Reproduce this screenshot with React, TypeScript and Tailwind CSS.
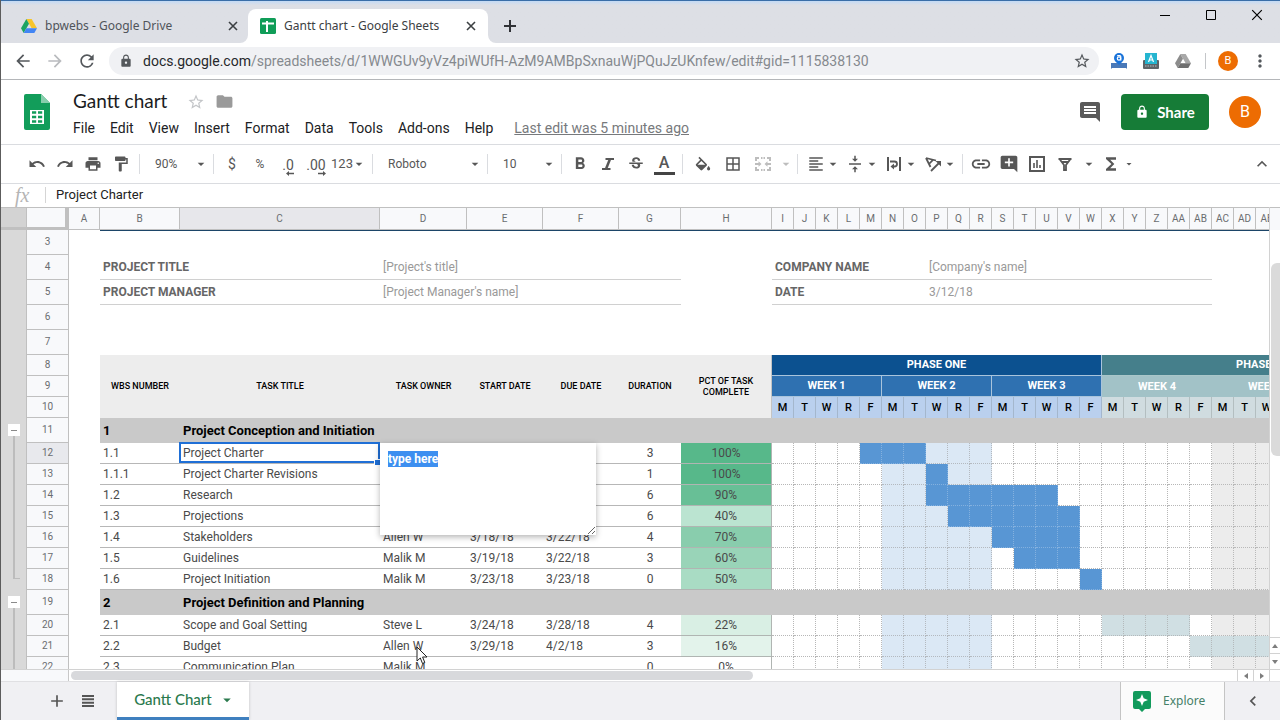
import { useEffect, useRef } from "react";
import type { ReactNode } from "react";
import {
  MdAdd,
  MdAddComment,
  MdArrowBack,
  MdArrowDropDown,
  MdArrowForward,
  MdBorderAll,
  MdComment,
  MdFolder,
  MdFormatAlignLeft,
  MdFormatBold,
  MdFormatPaint,
  MdFunctions,
  MdKeyboardArrowLeft,
  MdKeyboardArrowUp,
  MdLink,
  MdLock,
  MdMoreVert,
  MdPrint,
  MdRedo,
  MdRefresh,
  MdStarBorder,
  MdStrikethroughS,
  MdUndo,
  MdVerticalAlignCenter,
} from "react-icons/md";

type Task = {
  row: number;
  wbs: string;
  title: string;
  owner?: string;
  start?: string;
  due?: string;
  days?: string;
  pct?: string;
  pctBg?: string;
  bar?: [number, number];
  section?: boolean;
  last?: boolean;
};

const DAYS = Array.from({ length: 30 }, (_, i) => i);

const LOADED_DAYS = DAYS.slice(0, 23);

const DAY_COLUMNS = [
  ..."IJKLMNOPQRSTUVWXYZ".split(""),
  ..."ABCDE".split("").map((c) => "A" + c),
];

const TASKS: Task[] = [
  { row: 11, wbs: "1", title: "Project Conception and Initiation", section: true },
  { row: 12, wbs: "1.1", title: "Project Charter", days: "3", pct: "100%", pctBg: "bg-[#57b88a]", bar: [4, 6] },
  { row: 13, wbs: "1.1.1", title: "Project Charter Revisions", days: "1", pct: "100%", pctBg: "bg-[#57b88a]", bar: [7, 7] },
  { row: 14, wbs: "1.2", title: "Research", days: "6", pct: "90%", pctBg: "bg-[#68bf96]", bar: [7, 12] },
  { row: 15, wbs: "1.3", title: "Projections", days: "6", pct: "40%", pctBg: "bg-[#bbe4d1]", bar: [8, 13] },
  { row: 16, wbs: "1.4", title: "Stakeholders", owner: "Allen W", start: "3/18/18", due: "3/22/18", days: "4", pct: "70%", pctBg: "bg-[#89cdad]", bar: [10, 13] },
  { row: 17, wbs: "1.5", title: "Guidelines", owner: "Malik M", start: "3/19/18", due: "3/22/18", days: "3", pct: "60%", pctBg: "bg-[#99d4b8]", bar: [11, 13] },
  { row: 18, wbs: "1.6", title: "Project Initiation", owner: "Malik M", start: "3/23/18", due: "3/23/18", days: "0", pct: "50%", pctBg: "bg-[#a9dcc4]", bar: [14, 14], last: true },
  { row: 19, wbs: "2", title: "Project Definition and Planning", section: true },
  { row: 20, wbs: "2.1", title: "Scope and Goal Setting", owner: "Steve L", start: "3/24/18", due: "3/28/18", days: "4", pct: "22%", pctBg: "bg-[#d9efe4]", bar: [15, 18] },
  { row: 21, wbs: "2.2", title: "Budget", owner: "Allen W", start: "3/29/18", due: "4/2/18", days: "3", pct: "16%", pctBg: "bg-[#e3f3eb]", bar: [19, 22] },
  { row: 22, wbs: "2.3", title: "Communication Plan", owner: "Malik M", days: "0", pct: "0%", pctBg: "bg-white" },
];

const MENUS = ["File", "Edit", "View", "Insert", "Format", "Data", "Tools", "Add-ons", "Help"];

/* ---------- browser window ---------- */

function DriveLogo({ gray = false }: { gray?: boolean }) {
  return (
    <svg viewBox="0 0 24 21" className="w-4 h-3.5">
      <path d="M8 0h8l8 14h-8z" fill={gray ? "#a8a8a8" : "#f7c52b"} />
      <path d="M8 0l4 7-8 14-4-7z" fill={gray ? "#8c8c8c" : "#1da462"} />
      <path d="M8 14h16l-4 7H4z" fill={gray ? "#6f6f6f" : "#4285f4"} />
    </svg>
  );
}

function SheetsFavicon() {
  return (
    <svg viewBox="0 0 16 16" className="w-4 h-4">
      <rect width="16" height="16" rx="1.5" fill="#109d58" />
      <path d="M2 5.5h12M7 3v11" stroke="#fff" strokeWidth="2" />
    </svg>
  );
}

function Cross({ className = "" }: { className?: string }) {
  return (
    <svg viewBox="0 0 10 10" className={className} stroke="currentColor" fill="none">
      <path d="M1 1l8 8M9 1l-8 8" />
    </svg>
  );
}

function TabStrip() {
  return (
    <div className="flex h-[43px] border-t border-[#3a6ea8] bg-linear-to-b from-[#c3daf5] from-0% to-[#dddfe5] to-10% text-xs text-[#50545a] font-['Noto_Sans','Open_Sans',sans-serif]">
      <div className="flex w-[247px] items-center pl-5 pt-2">
        <DriveLogo />
        <span className="ml-2">bpwebs - Google Drive</span>
        <button aria-label="Close bpwebs tab" className="ml-auto mr-2.5 text-[#3c4043]">
          <Cross className="w-2.5 h-2.5 stroke-[1.6]" />
        </button>
      </div>
      <div className="relative mt-2 flex w-[240px] items-center rounded-t-lg bg-white pl-3 text-[#3c4043]">
        <svg viewBox="0 0 8 8" className="absolute -left-2 bottom-0 w-2 h-2">
          <path d="M8 0v8H0a8 8 0 0 0 8-8z" fill="#fff" />
        </svg>
        <svg viewBox="0 0 8 8" className="absolute -right-2 bottom-0 w-2 h-2">
          <path d="M0 0v8h8a8 8 0 0 1-8-8z" fill="#fff" />
        </svg>
        <SheetsFavicon />
        <span className="ml-2">Gantt chart - Google Sheets</span>
        <button aria-label="Close Gantt chart tab" className="ml-auto mr-3">
          <Cross className="w-2.5 h-2.5 stroke-[1.6]" />
        </button>
      </div>
      <button aria-label="New tab" className="ml-3 mt-2 flex w-5 items-center justify-center text-[#303236]">
        <svg viewBox="0 0 12 12" className="w-3 h-3" stroke="currentColor" strokeWidth="2">
          <path d="M6 0v12M0 6h12" />
        </svg>
      </button>
      <div className="ml-auto flex h-7 text-black">
        <button aria-label="Minimize" className="flex w-[46px] items-center justify-center">
          <svg viewBox="0 0 10 10" className="w-2.5 h-2.5" stroke="currentColor">
            <path d="M0 5.5h10" />
          </svg>
        </button>
        <button aria-label="Maximize" className="flex w-[46px] items-center justify-center">
          <svg viewBox="0 0 10 10" className="w-2.5 h-2.5" stroke="currentColor" fill="none">
            <path d="M.5.5h9v9h-9z" />
          </svg>
        </button>
        <button aria-label="Close window" className="flex w-[46px] items-center justify-center">
          <Cross className="w-3 h-3" />
        </button>
      </div>
    </div>
  );
}

function AddressBar() {
  return (
    <div className="flex h-[37px] items-center border-b border-[#b4b6b9] bg-white text-xl text-[#54585c]">
      <button aria-label="Back" className="ml-3 flex w-5 justify-center">
        <MdArrowBack />
      </button>
      <button aria-label="Forward" className="ml-3 flex w-5 justify-center text-[#b9bbbe]">
        <MdArrowForward />
      </button>
      <button aria-label="Reload" className="ml-3 flex w-5 justify-center">
        <MdRefresh />
      </button>
      <div className="ml-3 flex h-7 flex-1 items-center rounded-full bg-[#f0f1f4] pl-2.5 pr-2">
        <MdLock className="w-3.5 h-3.5" />
        <p className="ml-2.5 flex-1 truncate text-sm text-[#85898e] font-['Roboto',sans-serif]">
          <span className="text-[#26282b]">docs.google.com</span>
          /spreadsheets/d/1WWGUv9yVz4piWUfH-AzM9AMBpSxnauWjPQuJzUKnfew/edit#gid=1115838130
        </p>
        <button aria-label="Bookmark this page">
          <MdStarBorder className="w-[18px] h-[18px]" />
        </button>
      </div>
      <button aria-label="Bpwebs extension" className="ml-3 flex w-4 justify-center">
        <svg viewBox="0 0 16 16" className="w-4 h-4">
          <path d="M0 10h16v6l-1-1H1l-1 1z" fill="#4a79b8" />
          <circle cx="8" cy="5" r="5" fill="#1a73d9" />
          <path d="M8 12l-3-3h6z" fill="#1a73d9" />
          <circle cx="8" cy="5.5" r="1.7" fill="none" stroke="#fff" strokeWidth="1.2" />
          <path d="M6.2 2.6h2.6q1 0 1 1.2v3.8" fill="none" stroke="#fff" strokeWidth="1.2" />
        </svg>
      </button>
      <button aria-label="Keyboard extension" className="ml-4 flex w-4 justify-center">
        <svg viewBox="0 0 16 16" className="w-4 h-4">
          <rect y="7" width="16" height="9" rx="1" fill="#5d6468" />
          <path d="M2 10h12M2 13h12" stroke="#b6bcc0" strokeDasharray="1.5 1" />
          <path d="M2 0h12v11H2z" fill="#25b5d0" />
          <path d="M5.5 9L8 2.5 10.5 9M6.3 7h3.4" fill="none" stroke="#fff" strokeWidth="1.2" />
        </svg>
      </button>
      <button aria-label="Drive extension" className="ml-4 flex w-4 justify-center">
        <DriveLogo gray />
      </button>
      <span className="ml-3.5 h-4 w-px bg-[#c4c6c9]" />
      <button
        aria-label="Profile"
        className="ml-3 h-5 w-5 rounded-full bg-[#ed6c02] text-center text-[11px] leading-5 text-white"
      >
        B
      </button>
      <button aria-label="Browser menu" className="ml-3 mr-2.5">
        <MdMoreVert />
      </button>
    </div>
  );
}

/* ---------- document header ---------- */

function DocHeader() {
  return (
    <header className="flex h-[65px] items-center border-b border-[#dadce0] bg-white pl-[23px] pr-[19px]">
      <svg viewBox="0 0 26 36" className="w-[26px] h-9">
        <path d="M2 0h15l9 9v25a2 2 0 0 1-2 2H2a2 2 0 0 1-2-2V2a2 2 0 0 1 2-2z" fill="#129d5a" />
        <path d="M17 0l9 9h-9z" fill="#87ceac" />
        <path d="M6 16h14v14H6z" fill="#fff" />
        <path d="M8 18.5h4.2M14 18.5h4.2M8 23h4.2M14 23h4.2M8 27.5h4.2M14 27.5h4.2" stroke="#129d5a" strokeWidth="2.4" />
      </svg>
      <div className="ml-[23px] pt-[3px]">
        <div className="flex h-7 items-center">
          <h1 className="text-[19px] text-[#1b1c1e] font-['Lato',sans-serif]">Gantt chart</h1>
          <button aria-label="Star" className="ml-5 text-[#c3c5c8]">
            <MdStarBorder className="w-[18px] h-[18px]" />
          </button>
          <button aria-label="Move" className="ml-2.5 text-[#9a9a9a]">
            <MdFolder className="w-[19px] h-[19px]" />
          </button>
        </div>
        <nav className="flex h-6 items-center gap-[15px] text-sm text-[#202124]">
          {MENUS.map((m) => (
            <button key={m}>{m}</button>
          ))}
          <a href="#history" className="ml-1.5 text-[#77797c] underline">
            Last edit was 5 minutes ago
          </a>
        </nav>
      </div>
      <button aria-label="Comments" className="ml-auto text-[#5a5a5a]">
        <MdComment className="w-6 h-6" />
      </button>
      <button className="ml-[19px] flex h-9 w-[88px] items-center justify-center gap-2 rounded bg-[#167c37] text-[15px] font-bold text-white font-['Lato',sans-serif]">
        <MdLock className="w-3.5 h-3.5" />
        Share
      </button>
      <button
        aria-label="Account"
        className="ml-5 h-8 w-8 rounded-full bg-[#ed6c02] text-center text-base leading-8 text-white"
      >
        B
      </button>
    </header>
  );
}

/* ---------- toolbar ---------- */

function Tool({ label, className = "w-7", children }: { label: string; className?: string; children: ReactNode }) {
  return (
    <button aria-label={label} className={`flex h-7 shrink-0 items-center justify-center ${className}`}>
      {children}
    </button>
  );
}

function DropTool({ label, children }: { label: string; children: ReactNode }) {
  return (
    <button aria-label={label} className="flex h-7 w-[39px] shrink-0 items-center pl-[5px]">
      {children}
      <MdArrowDropDown className="w-4 h-4 shrink-0" />
    </button>
  );
}

function Separator() {
  return <span className="mx-1 h-5 w-px shrink-0 bg-[#dadce0]" />;
}

function PickList({ label, value, className }: { label: string; value: string; className: string }) {
  return (
    <div className={`relative shrink-0 ${className}`}>
      <select aria-label={label} defaultValue={value} className="block w-full appearance-none bg-transparent pl-[11px] text-xs">
        <option>{value}</option>
      </select>
      <MdArrowDropDown className="pointer-events-none absolute inset-y-0 right-0 my-auto w-4 h-4" />
    </div>
  );
}

function DecimalTool({ label, text, right }: { label: string; text: string; right?: boolean }) {
  return (
    <Tool label={label}>
      <span className="flex flex-col items-end pt-1 text-sm leading-4">
        {text}
        <svg viewBox="0 0 8 5" className="-mt-0.5 w-2 h-[5px]" fill="currentColor">
          <path d={right ? "M0 1.8h5V0l3 2.5L5 5V3.2H0z" : "M8 1.8H3V0L0 2.5 3 5V3.2h5z"} />
        </svg>
      </span>
    </Tool>
  );
}

function Toolbar() {
  const icon = "w-[18px] h-[18px] shrink-0";
  return (
    <div className="flex h-[39px] items-center border-b border-[#dadce0] bg-white pl-[22px] pr-1 text-[#575757]">
      <Tool label="Undo"><MdUndo className={icon} /></Tool>
      <Tool label="Redo"><MdRedo className={icon} /></Tool>
      <Tool label="Print"><MdPrint className={icon} /></Tool>
      <Tool label="Paint format"><MdFormatPaint className={icon} /></Tool>
      <Separator />
      <PickList label="Zoom" value="90%" className="w-[65px]" />
      <Separator />
      <Tool label="Format as currency"><span className="text-sm">$</span></Tool>
      <Tool label="Format as percent"><span className="text-xs">%</span></Tool>
      <DecimalTool label="Decrease decimal places" text=".0" />
      <DecimalTool label="Increase decimal places" text=".00" right />
      <Tool label="More formats" className="w-[38px]">
        <span className="text-[13px]">123</span>
        <MdArrowDropDown className="-ml-0.5 w-4 h-4" />
      </Tool>
      <Separator />
      <PickList label="Font" value="Roboto" className="w-[106px]" />
      <Separator />
      <PickList label="Font size" value="10" className="w-[65px]" />
      <Separator />
      <Tool label="Bold"><MdFormatBold className="w-5 h-5" /></Tool>
      <Tool label="Italic">
        <svg viewBox="0 0 14 14" className="w-3.5 h-3.5" fill="none" stroke="currentColor" strokeWidth="2">
          <path d="M4.5 2H13M1 12h8.500" />
          <path d="M9 2L5 12" strokeWidth="2.500" />
        </svg>
      </Tool>
      <Tool label="Strikethrough"><MdStrikethroughS className={icon} /></Tool>
      <Tool label="Text color">
        <span className="w-[21px] border-b-[3px] border-[#444] text-center text-base font-medium leading-[19px]">A</span>
      </Tool>
      <Separator />
      <Tool label="Fill color" className="w-8">
        <svg viewBox="2 -1 20 20" className="w-4 h-4" fill="currentColor">
          <path d="M16.560 8.940L7.620 0 6.210 1.410l2.380 2.380-5.150 5.150a1.490 1.490 0 0 0 0 2.120l5.500 5.500c.29.29.68.44 1.060.44s.77-.15 1.060-.44l5.500-5.500c.59-.58.59-1.530 0-2.120zM5.210 10L10 5.210 14.790 10zM19 11.500s-2 2.170-2 3.500a2 2 0 0 0 4 0c0-1.330-2-3.500-2-3.500z" />
        </svg>
      </Tool>
      <Tool label="Borders"><MdBorderAll className={icon} /></Tool>
      <Tool label="Merge cells" className="w-8 text-[#bdbdbd]">
        <svg viewBox="0 0 18 16" className="w-[18px] h-4" fill="none" stroke="currentColor" strokeWidth="2">
          <path d="M5 2H2v3M2 11v3h3M13 2h3v3M16 11v3h-3M7 2h1.500M9.500 2H11M7 14h1.500M9.500 14H11" />
          <path d="M1 8h4M17 8h-4" />
          <path d="M4.500 5.200L7.500 8l-3 2.800zM13.500 5.200L10.500 8l3 2.800z" fill="currentColor" stroke="none" />
        </svg>
      </Tool>
      <Tool label="Merge options" className="w-3.5 text-[#bdbdbd]"><MdArrowDropDown className="w-4 h-4 shrink-0" /></Tool>
      <Separator />
      <DropTool label="Horizontal align"><MdFormatAlignLeft className={icon} /></DropTool>
      <DropTool label="Vertical align"><MdVerticalAlignCenter className={icon} /></DropTool>
      <DropTool label="Text wrapping">
        <svg viewBox="0 0 18 18" className={icon} fill="none" stroke="currentColor" strokeWidth="2">
          <path d="M3 2v14M15 2v14" />
          <path d="M5 6.5h4.500a2.500 2.500 0 0 1 0 5H8" strokeWidth="1.800" />
          <path d="M9 8.500v6l-3.500-3z" fill="currentColor" stroke="none" />
        </svg>
      </DropTool>
      <DropTool label="Text rotation">
        <svg viewBox="0 0 18 18" className={icon} fill="none" stroke="currentColor" strokeWidth="1.800">
          <path d="M2 3l10 2.500M2 3l4.500 9M9 4.800L5 9" />
          <path d="M7 16l8-8" />
          <path d="M11.500 6H17v5.500z" fill="currentColor" stroke="none" />
        </svg>
      </DropTool>
      <Separator />
      <Tool label="Insert link"><MdLink className="w-[22px] h-[22px]" /></Tool>
      <Tool label="Insert comment"><MdAddComment className="w-5 h-5" /></Tool>
      <Tool label="Insert chart">
        <svg viewBox="0 0 16 16" className="w-4 h-4" fill="none" stroke="currentColor" strokeWidth="2">
          <path d="M1 1h14v14H1z" />
          <path d="M5 7v5M8 4v8M11 9v3" strokeWidth="1.600" />
        </svg>
      </Tool>
      <Tool label="Create a filter">
        <svg viewBox="0 0 16 14" className="w-4 h-3.5" fill="none" stroke="currentColor" strokeWidth="1.800">
          <path d="M1.500 2h13M2.500 2L7 8v5h2V8l4.500-6M4.500 5h7" />
        </svg>
      </Tool>
      <Tool label="Filter views" className="w-5"><MdArrowDropDown className="w-4 h-4" /></Tool>
      <Tool label="Functions" className="w-6"><MdFunctions className="w-5 h-5" /></Tool>
      <Tool label="More functions" className="w-3"><MdArrowDropDown className="w-3 h-3" /></Tool>
      <Tool label="Hide the menus" className="ml-auto w-7"><MdKeyboardArrowUp className="w-5 h-5" /></Tool>
    </div>
  );
}

function FormulaBar() {
  return (
    <div className="flex h-[23px] items-center bg-white pl-3.5 pb-0.5">
      <label htmlFor="formula" className="w-[31px] border-r border-[#d5d5d5] text-xl leading-4 italic text-[#b5b5b5] font-['Liberation_Serif',serif]">
        fx
      </label>
      <input
        id="formula"
        defaultValue="Project Charter"
        className="ml-2.5 flex-1 bg-transparent text-[13px] leading-5 text-[#222] outline-none"
      />
    </div>
  );
}

/* ---------- sheet ---------- */

function NoteEditor() {
  const ref = useRef<HTMLTextAreaElement>(null);

  useEffect(() => {
    ref.current?.focus({ preventScroll: true });
    ref.current?.select();
  }, []);

  return (
    <textarea
      ref={ref}
      aria-label="Note"
      defaultValue="type here"
      className="absolute left-0 top-0 z-20 h-[92px] w-[216px] resize bg-white px-2 py-2 text-xs leading-4 font-bold text-[#222] shadow-[0_2px_6px_rgba(0,0,0,0.3)] outline-none selection:bg-[#3d8ff0] selection:text-white"
    />
  );
}

function RowHead({ n, active }: { n: number; active?: boolean }) {
  return (
    <th
      scope="row"
      className={`border-b border-r border-[#c0c0c0] text-[10px] font-normal text-[#6a6d70] ${active ? "bg-[#e8e9ed]" : "bg-[#f8f9fb]"}`}
    >
      {n}
    </th>
  );
}

function Gutter({ kind }: { kind?: "toggle" | "line" | "end" }) {
  return (
    <td className="border-r border-[#c0c0c0] bg-[#d9d9d9] align-top">
      {kind === "toggle" && (
        <div className="flex h-[25px] flex-col items-center pt-1.5">
          <button aria-label="Collapse group" className="flex h-3 w-3 items-center justify-center bg-white">
            <span className="h-px w-1.5 bg-[#8a8a8a]" />
          </button>
          <span className="h-[7px] w-0.5 bg-[#bcbcbc]" />
        </div>
      )}
      {kind === "line" && <div className="mx-auto h-[21px] w-0.5 bg-[#bcbcbc]" />}
      {kind === "end" && <div className="ml-3 h-2.5 w-[7px] border-b border-l-2 border-[#bcbcbc]" />}
    </td>
  );
}

function dayCell(i: number, bar?: [number, number]) {
  const inBar = bar && i >= bar[0] && i <= bar[1];
  if (inBar) return i < 15 ? "bg-[#5896d4] border-[#84b1df]" : "bg-[#d0dfe3] border-[#b4b9bb]";
  if (i >= 5 && i <= 9) return "bg-[#dbe8f5] border-[#b4b9bf]";
  if (i >= 20) return "bg-[#ececec] border-[#b9b9b9]";
  return "bg-white border-[#b7b7b7]";
}

function TaskRow({ task }: { task: Task }) {
  if (task.section) {
    return (
      <tr className="h-[25px]">
        <Gutter kind="toggle" />
        <RowHead n={task.row} />
        <td />
        <td className="bg-[#c9c9c9] pl-[3px] text-[13px] font-bold text-black">{task.wbs}</td>
        <td colSpan={36} className="bg-[#c9c9c9] pl-[3px] text-[13px] font-bold text-black">
          {task.title}
        </td>
      </tr>
    );
  }

  const selected = task.row === 12;
  const cell = "border-b border-[#b7b7b7] pl-[3px]";
  return (
    <tr className="h-[21px]">
      <Gutter kind={task.last ? "end" : "line"} />
      <RowHead n={task.row} active={selected} />
      <td />
      <td className={cell}>{task.wbs}</td>
      <td className={`relative ${cell}`}>
        {task.title}
        {selected && (
          <div className="absolute -left-px -top-px right-0 bottom-0 z-10 border-2 border-[#1f6fd6]">
            <span className="absolute -bottom-1 -right-0.5 h-1.5 w-1.5 border-l border-t border-white bg-[#1f6fd6]" />
          </div>
        )}
      </td>
      <td className={`relative ${cell}`}>
        {task.owner}
        {selected && <NoteEditor />}
      </td>
      <td className={cell}>{task.start}</td>
      <td className={cell}>{task.due}</td>
      <td className="border-b border-[#b7b7b7] text-center">{task.days}</td>
      <td className={`border-b border-r border-[#b0b5b2] text-center ${task.pctBg}`}>{task.pct}</td>
      {LOADED_DAYS.map((i) => (
        <td key={i} className={`border-b border-r border-dotted ${dayCell(i, task.bar)}`} />
      ))}
    </tr>
  );
}

function InfoRow({ n, label, value, label2, value2 }: { n: number; label: string; value: string; label2: string; value2: string }) {
  const name = "border-b border-[#d0d0d0] pl-[3px] text-left font-bold text-[#666]";
  const text = "border-b border-[#d0d0d0] pl-[3px] text-[#999]";
  return (
    <tr className="h-[25px]">
      <Gutter />
      <RowHead n={n} />
      <td />
      <td colSpan={2} className={name}>{label}</td>
      <td colSpan={4} className={text}>{value}</td>
      <td />
      <td colSpan={7} className={name}>{label2}</td>
      <td colSpan={13} className={text}>{value2}</td>
      <td colSpan={10} />
    </tr>
  );
}

function BlankRow({ n, top }: { n: number; top?: boolean }) {
  return (
    <tr className="h-[25px]">
      <Gutter />
      <RowHead n={n} />
      <td />
      <td colSpan={37} className={top ? "border-t border-[#1c4568]" : ""} />
    </tr>
  );
}

function Sheet() {
  const colHead = "border-b border-r border-t border-[#c0c0c0] font-normal";
  const titleCell = "bg-[#ededed] text-center text-[9px] leading-[11px] font-medium text-black";
  return (
    <table className="w-[1431px] table-fixed border-separate border-spacing-0 bg-white text-xs leading-4 text-[#4a4a4a]">
      <colgroup>
        <col className="w-[26px]" />
        <col className="w-[42px]" />
        <col className="w-[31px]" />
        <col className="w-20" />
        <col className="w-[200px]" />
        <col className="w-[87px]" />
        <col className="w-[76px]" />
        <col className="w-[76px]" />
        <col className="w-[62px]" />
        <col className="w-[91px]" />
        {DAYS.map((i) => (
          <col key={i} className="w-[22px]" />
        ))}
      </colgroup>
      <thead>
        <tr className="h-[23px] bg-[#f8f9fb] text-[10px] text-[#6a6d70]">
          <td className="border-b-[3px] border-r border-t border-[#c0c0c0] bg-[#d3d3d3]" />
          <td className="border-b-[3px] border-r-4 border-t border-[#c0c0c0] bg-[#f8f9fb]" />
          {["A", "B", "C", "D", "E", "F", "G", "H", ...DAY_COLUMNS].map((c) => (
            <th key={c} scope="col" className={`${colHead} ${c === "C" ? "bg-[#e7e7eb]" : ""}`}>
              {c}
            </th>
          ))}
        </tr>
      </thead>
      <tbody>
        <BlankRow n={3} top />
        <InfoRow n={4} label="PROJECT TITLE" value="[Project's title]" label2="COMPANY NAME" value2="[Company's name]" />
        <InfoRow n={5} label="PROJECT MANAGER" value="[Project Manager's name]" label2="DATE" value2="3/12/18" />
        <BlankRow n={6} />
        <BlankRow n={7} />
        <tr className="h-[21px] text-[11px] font-bold text-white">
          <Gutter />
          <RowHead n={8} />
          <td />
          <td rowSpan={3} className={titleCell}>WBS NUMBER</td>
          <td rowSpan={3} className={titleCell}>TASK TITLE</td>
          <td rowSpan={3} className={titleCell}>TASK OWNER</td>
          <td rowSpan={3} className={titleCell}>START DATE</td>
          <td rowSpan={3} className={titleCell}>DUE DATE</td>
          <td rowSpan={3} className={titleCell}>DURATION</td>
          <td rowSpan={3} className={`border-r border-[#c4c4c4] ${titleCell}`}>PCT OF TASK COMPLETE</td>
          <td colSpan={15} className="border-b border-r border-[#a9c4dc] bg-[#0c5190] text-center">PHASE ONE</td>
          <td colSpan={15} className="border-b border-[#a9c6c9] bg-[#457f8b] text-center">PHASE TWO</td>
        </tr>
        <tr className="h-[21px] text-[11px] font-bold text-white">
          <Gutter />
          <RowHead n={9} />
          <td />
          {[1, 2, 3].map((w) => (
            <td key={w} colSpan={5} className="border-b border-r border-[#a9c4dc] bg-[#2f71b1] text-center">
              WEEK {w}
            </td>
          ))}
          {[4, 5].map((w) => (
            <td key={w} colSpan={5} className="bg-[#a2c2c7] text-center">
              WEEK {w}
            </td>
          ))}
        </tr>
        <tr className="h-[21px] text-[11px] font-medium text-black">
          <Gutter />
          <RowHead n={10} />
          <td />
          {LOADED_DAYS.map((i) => (
            <td
              key={i}
              className={`border-r text-center ${i < 15 ? "border-[#a4b7cd] bg-[#bad0ee]" : "border-[#b3bec0] bg-[#d0dce0]"}`}
            >
              {"MTWRF"[i % 5]}
            </td>
          ))}
        </tr>
        {TASKS.map((t) => (
          <TaskRow key={t.row} task={t} />
        ))}
      </tbody>
    </table>
  );
}

function Arrow({ d }: { d: string }) {
  return (
    <svg viewBox="0 0 6 6" className="w-1.5 h-1.5" fill="#7d7d7d">
      <path d={d} />
    </svg>
  );
}

function VerticalScroll() {
  return (
    <div className="flex w-[11px] shrink-0 flex-col border-l border-[#d2d2d2] bg-white">
      <div className="h-[23px] border-y border-t-[#c0c0c0] border-b-transparent bg-[#f8f9fb]" />
      <div className="ml-px mt-[33px] h-[193px] rounded-l-md bg-[#dadada]" />
      <button aria-label="Scroll up" className="mt-auto flex h-4 items-center justify-center border-t border-[#d2d2d2]">
        <Arrow d="M0 5l3-4 3 4z" />
      </button>
      <button aria-label="Scroll down" className="flex h-4 items-center justify-center border-t border-[#d2d2d2]">
        <Arrow d="M0 1l3 4 3-4z" />
      </button>
    </div>
  );
}

function HorizontalScroll() {
  return (
    <div className="flex h-3 border-t border-[#d2d2d2] bg-white">
      <div className="w-[68px] border-r border-[#c8c8c8] bg-[#f8f9fb]" />
      <div className="ml-0.5 mr-auto my-px w-8/15 rounded-full bg-[#d8d9dc]" />
      <button aria-label="Scroll left" className="flex w-4 items-center justify-center border-l border-[#d2d2d2]">
        <Arrow d="M5 0L1 3l4 3z" />
      </button>
      <button aria-label="Scroll right" className="flex w-4 items-center justify-center border-l border-[#d2d2d2]">
        <Arrow d="M1 0l4 3-4 3z" />
      </button>
      <div className="w-[11px] border-l border-[#d2d2d2]" />
    </div>
  );
}

function BottomBar() {
  return (
    <footer className="flex h-[39px] items-stretch border-t border-[#e0e0e3] bg-[#f0f0f3] text-[#555]">
      <button aria-label="Add sheet" className="ml-[46px] flex w-5 items-center">
        <MdAdd className="w-5 h-5" />
      </button>
      <button aria-label="All sheets" className="ml-3 flex w-[18px] items-center justify-center">
        <svg viewBox="0 0 12 12" className="w-3 h-3" stroke="currentColor" strokeWidth="2">
          <path d="M0 1h12M0 4.300h12M0 7.700h12M0 11h12" />
        </svg>
      </button>
      <button className="ml-5 flex w-[132px] items-center justify-center gap-1.5 border-b-[3px] border-[#3f80bf] bg-white pl-1 text-[15px] font-medium text-[#2b7a4e] shadow-[0_0_3px_rgba(0,0,0,0.2)] font-['Lato',sans-serif]">
        Gantt Chart
        <MdArrowDropDown className="w-[18px] h-[18px]" />
      </button>
      <button className="ml-auto flex w-[105px] items-center gap-3 border-x border-[#c4c4c4] bg-[#fbfbfb] pl-3 text-xs text-[#468068] font-['Noto_Sans','Open_Sans',sans-serif]">
        <svg viewBox="0 0 18 21" className="w-[18px] h-[21px]">
          <path d="M2 0h14a2 2 0 0 1 2 2v14a2 2 0 0 1-2 2h-4l-3 3-3-3H2a2 2 0 0 1-2-2V2a2 2 0 0 1 2-2z" fill="#129a5c" />
          <path d="M9 3l1.700 4.300L15 9l-4.300 1.700L9 15l-1.700-4.300L3 9l4.300-1.700z" fill="#fff" />
        </svg>
        Explore
      </button>
      <button aria-label="Show side panel" className="flex w-[55px] items-center justify-center">
        <MdKeyboardArrowLeft className="w-5 h-5" />
      </button>
    </footer>
  );
}

export default function App() {
  return (
    <div className="relative flex h-screen flex-col overflow-hidden border-l border-[#5c5c5c] bg-white font-['Roboto',sans-serif]">
      <TabStrip />
      <AddressBar />
      <DocHeader />
      <Toolbar />
      <FormulaBar />
      <div className="flex min-h-0 flex-1">
        <div className="min-w-0 flex-1 overflow-hidden">
          <Sheet />
        </div>
        <VerticalScroll />
      </div>
      <HorizontalScroll />
      <BottomBar />
      {/* mouse pointer */}
      <svg viewBox="0 0 12 19" className="absolute left-[415px] top-[646px] z-30 w-3 h-[19px]">
        <path d="M1 1v14l3.300-3 2.200 5.500 2.300-1L6.600 11H11z" fill="#fff" stroke="#222" />
      </svg>
    </div>
  );
}
